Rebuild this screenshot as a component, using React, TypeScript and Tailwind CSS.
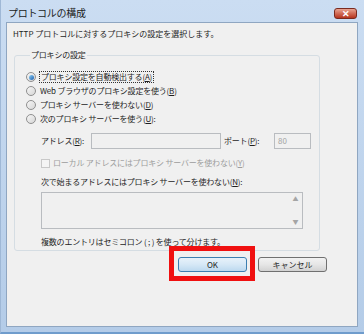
import React from 'react';

const FONT = { fontFamily: '"Noto Sans CJK JP", "Noto Sans", sans-serif' };

const U: React.FC<{ children: React.ReactNode }> = ({ children }) => (
  <span className="underline underline-offset-1">{children}</span>
);

const Radio: React.FC<{ checked?: boolean }> = ({ checked }) => (
  <span className="flex items-center justify-center w-[10px] h-[10px] rounded-full border border-[#8f8f8f] bg-gradient-to-br from-[#f6f6f6] to-[#d6d6d6] shrink-0">
    {checked && (
      <span className="w-[5px] h-[5px] rounded-full bg-gradient-to-br from-[#8fd0f5] to-[#1a5fae]" />
    )}
  </span>
);

export default function App() {
  return (
    <div
      className="w-[364px] h-[334px] flex flex-col bg-gradient-to-b from-[#cbddf2] to-[#b4cce8] border-b-2 border-[#6f9ccc] border-l border-l-[#9fb8d6] pl-[5px] pr-[6px] pb-[5px] text-[#1e1e1e]"
      style={FONT}
    >
      {/* Title bar */}
      <div className="h-[22px] flex items-center justify-between shrink-0">
        <span className="text-[10px] tracking-[-0.3px] text-[#1b1b1b] pl-[2px] pt-[3px]">プロトコルの構成</span>
        <span className="mt-[4px] mr-[1px] w-[23px] h-[11px] rounded-[3px] border border-[#7a2a1f] bg-gradient-to-b from-[#e8a391] via-[#d06a55] to-[#b5331d] flex items-center justify-center text-white text-[9px] font-bold leading-none">
          ✕
        </span>
      </div>

      {/* Client area */}
      <div className="flex-1 bg-[#f0f0f0] border border-[#8fa6c1] pl-[6px] pt-[5px] text-[8px] leading-[12px]">
        <div>HTTP プロトコルに対するプロキシの設定を選択します。</div>

        <fieldset className="mt-[9px] ml-[1px] w-[306px] border border-[#d5dde3] rounded-[3px] pl-[11px] pb-[1px]">
          <legend className="ml-[4px] px-[1px] leading-[12px] tracking-[-0.2px]">プロキシの設定</legend>

          <div className="mt-[9px] flex flex-col">
            <div className="h-[14px] flex items-center gap-[3px]">
              <Radio checked />
              <span className="border border-dotted border-[#333] leading-[10px] px-[1px] tracking-[-0.2px]">プロキシ設定を自動検出する(<U>A</U>)</span>
            </div>
            <div className="h-[14px] flex items-center gap-[4px]">
              <Radio />
              <span className="tracking-[-0.2px]">Web ブラウザのプロキシ設定を使う(<U>B</U>)</span>
            </div>
            <div className="h-[14px] flex items-center gap-[4px]">
              <Radio />
              <span className="tracking-[-0.2px]">プロキシ サーバーを使わない(<U>D</U>)</span>
            </div>
            <div className="h-[14px] flex items-center gap-[4px]">
              <Radio />
              <span className="tracking-[-0.2px]">次のプロキシ サーバーを使う(<U>U</U>):</span>
            </div>
          </div>

          <div className="pl-[15px]">
            <div className="mt-[7px] flex items-center h-[16px]">
              <span className="w-[50px] tracking-[-0.2px]">アドレス(<U>R</U>):</span>
              <span className="w-[130px] h-[16px] border border-[#b9bcc0] bg-[#f0f0f0]" />
              <span className="ml-[3px] w-[50px] tracking-[-0.2px]">ポート(<U>P</U>):</span>
              <span className="w-[37px] h-[16px] border border-[#b9bcc0] bg-[#f0f0f0] text-[#a3a3a3] pl-[3px] leading-[14px]">80</span>
            </div>

            <div className="mt-[7px] h-[14px] flex items-center gap-[3px] text-[#9d9d9d]">
              <span className="w-[9px] h-[9px] border border-[#c8c8c8] bg-[#f4f4f4]" />
              <span className="tracking-[-0.2px]">ローカル アドレスにはプロキシ サーバーを使わない(<U>Y</U>)</span>
            </div>

            <div className="mt-[5px] h-[14px] flex items-center tracking-[-0.2px]">
              次で始まるアドレスにはプロキシ サーバーを使わない(<U>N</U>):
            </div>

            <div className="mt-[3px] w-[262px] h-[37px] border border-[#b9bcc0] bg-[#f0f0f0] flex justify-end">
              <div className="w-[13px] flex flex-col items-center justify-between py-[3px] text-[6px] leading-none text-[#a5a5a5]">
                <span>▲</span>
                <span>▼</span>
              </div>
            </div>

            <div className="mt-[6px] h-[14px] flex items-center tracking-[-0.2px]">
              複数のエントリはセミコロン ( ; ) を使って分けます。
            </div>
          </div>
        </fieldset>

        <div className="mt-[6px] flex gap-[11px] pl-[165px]">
          <div className="relative">
            <button className="w-[69px] h-[15px] rounded-[3px] border border-[#3c7fb1] bg-gradient-to-b from-[#e8f2fa] via-[#d6e8f6] to-[#bcd9ef] text-[8px] leading-none text-[#1e1e1e]">
              OK
            </button>
            <span className="absolute -left-[9px] -top-[11px] w-[86px] h-[35px] border-[5px] border-[#f01010]" />
          </div>
          <button className="w-[69px] h-[15px] rounded-[3px] border border-[#707070] bg-gradient-to-b from-[#f2f2f2] via-[#e6e6e6] to-[#d2d2d2] text-[8px] leading-none text-[#1e1e1e]">
            キャンセル
          </button>
        </div>
      </div>
    </div>
  );
}
